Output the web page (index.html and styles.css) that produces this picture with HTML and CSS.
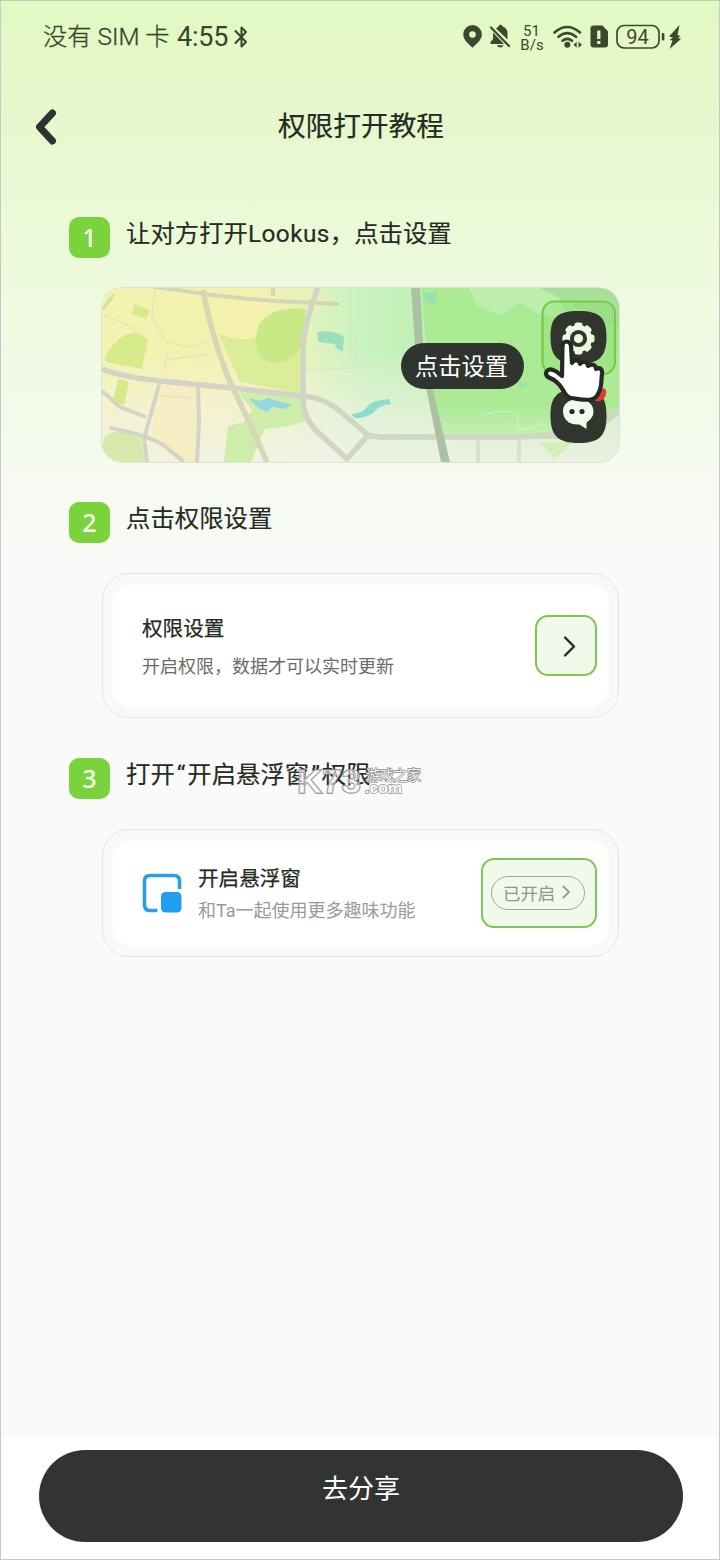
FILE: index.html
```html
<!DOCTYPE html>
<html lang="zh-CN">
<head>
<meta charset="utf-8">
<title>权限打开教程</title>
<link rel="stylesheet" href="styles.css">
</head>
<body>
<div class="screen">
  <header class="status">
    <span class="carrier">没有 SIM 卡</span>
    <span class="clock">4:55</span>
    <svg class="bt" width="17" height="26" viewBox="0 0 17 26"><path d="M2.500 7L13 18 8.500 22.500V3.500L13 8 2.500 19" fill="none" stroke="#37442b" stroke-width="2" stroke-linejoin="round" stroke-linecap="round"/></svg>
    <svg class="status-icons" width="230" height="30" viewBox="460 21 230 30" fill="#3c492f">
      <path fill-rule="evenodd" d="M472.500 24a9.200 9.200 0 0 0-9.200 9.200c0 5.300 4 8.600 9.200 13.600 5.200-5 9.300-8.300 9.300-13.600A9.200 9.200 0 0 0 472.500 24zm0 6.200a3.300 3.300 0 1 1 0 6.600 3.300 3.300 0 0 1 0-6.600z"/>
      <path d="M493 31.500L504 43H490.500v-2.300l2.500-2.500zM496 27.500l2.500-2c.3-1.200 1-1.700 2-1.700s2 .8 2 1.700c3.500 1.200 5 3.600 5 6.400v6.500zM497 44.300h6.500c-.6 1.600-1.700 2.200-3.200 2.200s-2.700-.6-3.300-2.200z"/>
      <path d="M491 26.500L509 45" stroke="#3c492f" stroke-width="2.200" stroke-linecap="round"/>
      <text x="531.500" y="34.500" class="rate">51</text>
      <text x="532" y="48.500" class="rate">B/s</text>
      <g fill="none" stroke="#3c492f" stroke-width="2.600" stroke-linecap="round"><path d="M554.500 31.500Q567 20.500 580 31.500"/><path d="M558.500 35.800Q567.200 28.300 576 35.800"/><path d="M562.500 39.800Q567.200 36 572 39.800"/></g>
      <circle cx="567.300" cy="43.700" r="3"/>
      <path d="M573.500 43.700l3.200-3v6zM582 43.700l-3.500-3v6z"/>
      <path d="M593.500 24.500h8.800l5.700 5.800v13.200q0 3-3 3h-11.500q-3 0-3-3v-16q0-3 3-3z"/>
      <path d="M597.200 29.500h3.200v8.500h-3.200zM597.200 40h3.200v3h-3.200z" fill="#e4f8c8"/>
      <rect x="617" y="24.500" width="42" height="22.500" rx="7" fill="none" stroke="#3c492f" stroke-width="1.700"/>
      <text x="637.500" y="43.200" class="battery">94</text>
      <rect x="661.800" y="32" width="2.600" height="7.500" rx="1"/>
      <path d="M679.500 24l-10.500 11.500 4 1-3.500 2.500 3 .500-3 8.500L681 38l-3-1 2.500-2-3-1z"/>
    </svg>
  </header>

  <nav class="nav">
    <svg class="back" width="26" height="38" viewBox="0 0 26 38"><path d="M20.500 5L7.500 19l13 14" fill="none" stroke="#303230" stroke-width="7" stroke-linecap="round" stroke-linejoin="round"/></svg>
    <h1 class="title">权限打开教程</h1>
  </nav>

  <main class="steps">
    <section class="step step-map">
      <div class="step-head"><span class="num">1</span><h2 class="step-title">让对方打开<span class="brand">Lookus</span>，点击设置</h2></div>
      <div class="map">
        <svg class="map-art" viewBox="102 288 517 174" width="517" height="174">
          <defs>
            <linearGradient id="base" x1="0" x2="1"><stop offset="0" stop-color="#f3f2b0"/><stop offset=".3" stop-color="#f4f1ae"/><stop offset=".4" stop-color="#e3f3bb"/><stop offset=".5" stop-color="#c9f2c0"/><stop offset=".64" stop-color="#bff0b2"/><stop offset="1" stop-color="#b5e9a6"/></linearGradient>
            <linearGradient id="fade" x1="0" y1="0" x2="0" y2="1"><stop offset=".35" stop-color="#f5f2ea" stop-opacity="0"/><stop offset=".75" stop-color="#f3f2e8" stop-opacity=".65"/><stop offset="1" stop-color="#f2f2ea" stop-opacity=".85"/></linearGradient>
            <linearGradient id="park" x1="0" y1="0" x2="0" y2="1"><stop offset="0" stop-color="#aaeb93"/><stop offset=".8" stop-color="#adea96"/><stop offset="1" stop-color="#c5efb3"/></linearGradient>
            <filter id="soft" x="-5%" y="-5%" width="110%" height="110%"><feGaussianBlur stdDeviation=".7"/></filter>
          </defs>
          <rect x="102" y="288" width="517" height="174" fill="url(#base)"/>
          <rect x="102" y="288" width="517" height="174" fill="url(#fade)"/>
          <g filter="url(#soft)">
            <path d="M156 386h42v76h-18l-28-22z" fill="#f6edc4"/>
            <path d="M421 286h202v120l-45 28-140 2-8-46z" fill="url(#park)"/>
            <path d="M469 288l8 18 24 10 18-14 20 12 30 6-14-32z" fill="#bcefad"/>
            <path d="M540 288l79 40v-40z" fill="#a8df9b"/>
            <path d="M539 442l16 16 18-16z" fill="#d3eebb"/>
            <path d="M104 360q6-16 21-25 12-5 23 4l-6 30-32-6z" fill="#d8eb8b"/>
            <path d="M134 304l16 6-4 9-14-5zM118 379l11 3-5 23-11-4z" fill="#d7ea8a"/>
            <path d="M102 310q4-12 14-18l-4 8-8 10z" fill="#cfe49a"/>
            <path d="M218 333q18 9 39 5l47-28-2 84-62-12z" fill="#dbed98"/>
            <path d="M306 309q-34-3-47 15-9 28 9 38 24 4 33-17z" fill="#c9e886"/>
            <path d="M238 392l64 4 3 26q-26 6-40 7l-14 33h-27l4-36 16-4 8-12z" fill="#cfedaa"/>
            <path d="M105 436q14-9 36 1l4 25h-25q-14-3-18-15z" fill="#d6e9aa"/>
            <path d="M317 332q18-3 27 5l-1 14q-7-1-8-7l-17-2z" fill="#9bdfbd"/>
            <path d="M249 398l11 3 8-3 24 7-7 4-12-2-6 5-10-5z" fill="#94d7dc"/>
            <path d="M351 414q11 0 16-7t22-8l2 5q-12 1-18 9-9 6-18 5z" fill="#8edccb"/>
            <path d="M423 293l14-1-2 12-10-2zM519 382l9 2-4 5-6-2z" fill="#98e2ae"/>
          </g>
          <g fill="none" stroke="#dfe2b8" stroke-width="1.500" opacity=".65"><path d="M155 288l-3 30 15 25 24 4 20-6M165 360l45-6M104 315l24 10 14 12M160 396l38 2M358 318l-4 50-48 2M362 368l50 -4M168 350l-4 20"/><path d="M483 415q35-10 35 6t22 2" stroke="#d2f5c6"/></g>
          <g fill="none" stroke="#d2d4c5" stroke-width="5.500" stroke-linejoin="round" filter="url(#soft)">
            <path d="M102 369q20 8 58 12l73 7 70 8q20 1 38 16l27 23q12 3 30 2l120 0q70-2 101-27"/>
            <path d="M203 290q7 40 24 85 20 42 40 87" stroke="#d6d6b8"/>
            <path d="M318 288q-15 38-15 65v43q-1 23 18 39l26 24 21-24"/>
            <path d="M160 381l-16 58 3 23M110 428q42 8 56 19l18 15M198 384l1 38-2 40M102 391l18 16 26 10" stroke-width="4"/>
            <path d="M150 286l55 8q30 4 70 7l64 3M273 288v8" stroke-width="4" stroke="#d6d5b4"/>
            <path d="M519 438v24M478 438v24" stroke-width="4" stroke="#d9e1cd"/>
          </g>
          <path d="M368 437h192q40-6 59-27" fill="none" stroke="#cddac2" stroke-width="6" filter="url(#soft)"/>
          <path d="M411 288h9l3 54 10 48 17 72h-9l-14-70-12-48z" fill="#acc1a2" filter="url(#soft)"/>
        </svg>
        <svg class="map-tools" viewBox="538 296 82 150" width="82" height="150">
          <rect x="542.500" y="301.500" width="72.500" height="72.500" rx="12" fill="#70d747" fill-opacity=".22" stroke="#76cc44" stroke-width="2.200"/>
          <path d="M578.500 311c22 0 28 7 28 26s-7 27-28 27-28-8-28-27 6-26 28-26zM578.500 389c22 0 28 7 28 27s-7 27-28 27-28-8-28-27 6-27 28-27z" fill="#30352e"/>
          <path d="M603 388q4 1 3 6-1 5-6 7h-6z" fill="#e53a30"/>
          <g transform="translate(578.500 338.500)" fill="#edf9df"><circle r="13.500"/><rect x="-4" y="-16" width="8" height="32" rx="2.500"/><rect x="-4" y="-16" width="8" height="32" rx="2.500" transform="rotate(45)"/><rect x="-4" y="-16" width="8" height="32" rx="2.500" transform="rotate(90)"/><rect x="-4" y="-16" width="8" height="32" rx="2.500" transform="rotate(135)"/><circle r="6.600" stroke="#30352e" stroke-width="4"/></g>
          <path d="M563 411c0-7 6-12 15-12s15.500 5 15.500 13c0 4-3 8-7 10.500V429l-7-4.500c-10 1-16.500-5-16.500-13.500z" fill="#f2faed"/>
          <circle cx="572" cy="411.500" r="2.600" fill="#252a24"/><circle cx="582" cy="411.500" r="2.600" fill="#252a24"/>
          <path d="M562.500 346c0-6 8-6 8.500 0l1 17c2-4 8-3 8 1 3-4 8-2 8 2 4-3 8-1 8 3 4-2 6.500 0 6 5-1 7 0 12-3 18-2 5-4 7-8 7.500-7 1-12-.5-20-1.500-4-.5-6-4-8-8-3-5-6-8-9-10l-6-3c-5-4 0-9 5-7 4 1 6 4 9 6z" fill="#fff" stroke="#252824" stroke-width="4.200" stroke-linejoin="round"/>
        </svg>
        <span class="tip">点击设置</span>
      </div>
    </section>

    <section class="step step-setting">
      <div class="step-head"><span class="num">2</span><h2 class="step-title">点击权限设置</h2></div>
      <div class="frame frame-a">
        <div class="card">
          <div class="copy"><h3 class="card-title">权限设置</h3><p class="card-sub">开启权限，数据才可以实时更新</p></div>
          <span class="go"><svg width="16" height="24" viewBox="0 0 16 24"><path d="M3 3.500l9 9-9 9" fill="none" stroke="#252b24" stroke-width="2.400" stroke-linecap="round" stroke-linejoin="round"/></svg></span>
        </div>
      </div>
    </section>

    <section class="step step-float">
      <div class="step-head"><span class="num">3</span><h2 class="step-title">打开<span class="quote">“</span>开启悬浮窗<span class="quote">”</span>权限</h2></div>
      <div class="frame frame-b">
        <div class="card">
          <svg class="pip" width="40" height="40" viewBox="0 0 40 40"><path d="M15.500 37.500H8q-5.500 0-5.500-5.500V8q0-5.500 5.500-5.500h24q5.500 0 5.500 5.500v8" fill="none" stroke="#2b9fe2" stroke-width="3.600"/><rect x="19" y="19" width="20.500" height="20.500" rx="4.500" fill="#219fee"/></svg>
          <div class="copy"><h3 class="card-title">开启悬浮窗</h3><p class="card-sub pale">和Ta一起使用更多趣味功能</p></div>
          <span class="highlight"><span class="state">已开启<svg width="9" height="14" viewBox="0 0 9 14"><path d="M1.500 1.500L7 7l-5.500 5.500" fill="none" stroke="#93998d" stroke-width="1.800" stroke-linecap="round"/></svg></span></span>
        </div>
      </div>
      <svg class="watermark" viewBox="296 762 128 36" width="128" height="36">
        <g fill="#fff" fill-opacity=".55" stroke="#8d8d8d" stroke-width="1.400" paint-order="stroke">
          <text x="297" y="793" font-size="34" textLength="64" lengthAdjust="spacingAndGlyphs" class="mark">K73</text>
          <text x="366" y="779.500" font-size="14" textLength="55" class="mark-cn">游戏之家</text>
          <text x="365" y="792.500" font-size="15" textLength="37" lengthAdjust="spacingAndGlyphs" class="mark solid">.com</text>
        </g>
      </svg>
    </section>
  </main>

  <footer class="footer"><button class="share">去分享</button></footer>
</div>
</body>
</html>
```
FILE: styles.css
```css
* { box-sizing: border-box; margin: 0; }
body { font-family: Roboto, "Noto Sans CJK SC", sans-serif; color: #252b22; }
h1, h2, h3 { font-weight: 400; }
svg { display: block; flex: none; }

.screen {
  width: 720px;
  height: 1560px;
  display: flex;
  flex-direction: column;
  border: 1px solid #c8c8c8;
  border-top-color: #c1cdb4;
  background: linear-gradient(180deg, #e2f9c2 0, #e6f8cc 100px, #ebf9d8 230px, #f1fae5 370px, #f7faf3 500px, #fafafa 600px);
}

.status { height: 72px; display: flex; align-items: center; padding-left: 42px; color: #37442b; }
.carrier { width: 134px; padding-bottom: 5px; font-size: 24.300px; font-weight: 300; white-space: nowrap; -webkit-text-stroke: .3px; }
.clock { width: 55px; font-size: 27px; line-height: 30px; letter-spacing: -.2px; }
.bt { margin-left: 1px; }
.status-icons { margin-left: auto; margin-right: 29px; }
.rate { font: 400 15px Roboto, sans-serif; text-anchor: middle; }
.battery { font: 400 20px Roboto, sans-serif; text-anchor: middle; }

.nav { height: 110px; display: grid; grid-template-columns: 60px 1fr 60px; align-items: center; padding-bottom: 4px; }
.back { margin-left: 31px; margin-top: 2px; }
.title { text-align: center; padding: 2px 0 0 2px; font-size: 27.700px; line-height: 40px; -webkit-text-stroke: .2px; }

.steps { flex: 1; padding: 34px 0 0 68px; }
.step { position: relative; display: flex; flex-direction: column; }
.step-map { height: 285px; }
.step-setting { height: 256px; }
.step-head { display: flex; align-items: flex-start; gap: 16px; height: 71px; }
.num {
  width: 41px; height: 41px; border-radius: 10px; background: #7bd33c; color: #f6ffee;
  font: 500 25px/40px "Noto Sans", sans-serif; text-align: center;
}
.step-title { font-size: 24.400px; line-height: 34px; white-space: nowrap; -webkit-text-stroke: .15px; }
.brand { letter-spacing: .4px; }
.quote { display: inline-block; width: 12.500px; text-align: center; }

.map { position: relative; width: 517px; height: 174px; margin-left: 33px; border-radius: 20px; box-shadow: 0 0 0 1px #dde3d4; overflow: hidden; }
.map-tools { position: absolute; left: 436px; top: 8px; }
.tip {
  position: absolute; left: 299px; top: 55px; width: 123px; height: 46px; border-radius: 23px; padding-right: 2px;
  background: #2f342e; color: #fff; font-size: 23.300px; line-height: 48px; text-align: center;
}

.frame { margin-left: 33px; width: 517px; border: 1.500px solid #e5e5e4; border-radius: 27px; padding: 11px 10px; background: #f9f9f8; }
.frame-a { height: 145px; }
.frame-b { height: 128px; }
.card { height: 100%; display: flex; align-items: center; background: #fff; border-radius: 18px; padding: 0 11px 0 29px; box-shadow: 0 0 4px #fff; }
.copy { flex: 1; padding-top: 2px; }
.card-title { font-size: 20.600px; line-height: 30px; -webkit-text-stroke: .25px; }
.card-sub { font-size: 18px; line-height: 26px; color: #6b6b6b; margin-top: 10px; }
.pale { color: #9a9a9a; margin-top: 4px; }
.go { width: 62px; height: 61px; display: flex; align-items: center; justify-content: center; padding-left: 7px; border: 2.500px solid #7dc752; border-radius: 13px; background: #f0f9ea; }
.pip { margin-right: 16px; }
.highlight { width: 116px; height: 70px; display: flex; align-items: center; justify-content: center; padding-right: 2px; border: 2.500px solid #7dc752; border-radius: 13px; background: #f0f9ea; }
.state { width: 94px; height: 34px; display: flex; align-items: center; gap: 7px; padding: 0 0 2px 11px; border: 1.500px solid #a3aa9c; border-radius: 17px; font-size: 17.400px; color: #8f968a; white-space: nowrap; }
.watermark { position: absolute; left: 227px; top: 4px; }
.mark { font-family: "Liberation Sans", sans-serif; font-weight: 700; }
.mark-cn { font-family: "Noto Sans CJK SC", sans-serif; font-weight: 400; fill-opacity: .9; }
.solid { fill-opacity: 1; }

.footer { height: 121px; background: #fff; padding: 12px 36px 0 38px; }
.share { display: block; width: 644px; height: 92px; border: 0; border-radius: 46px; padding: 0 0 20px; background: #333; color: #fff; font-family: "Noto Sans CJK SC", sans-serif; font-size: 26px; }
```
